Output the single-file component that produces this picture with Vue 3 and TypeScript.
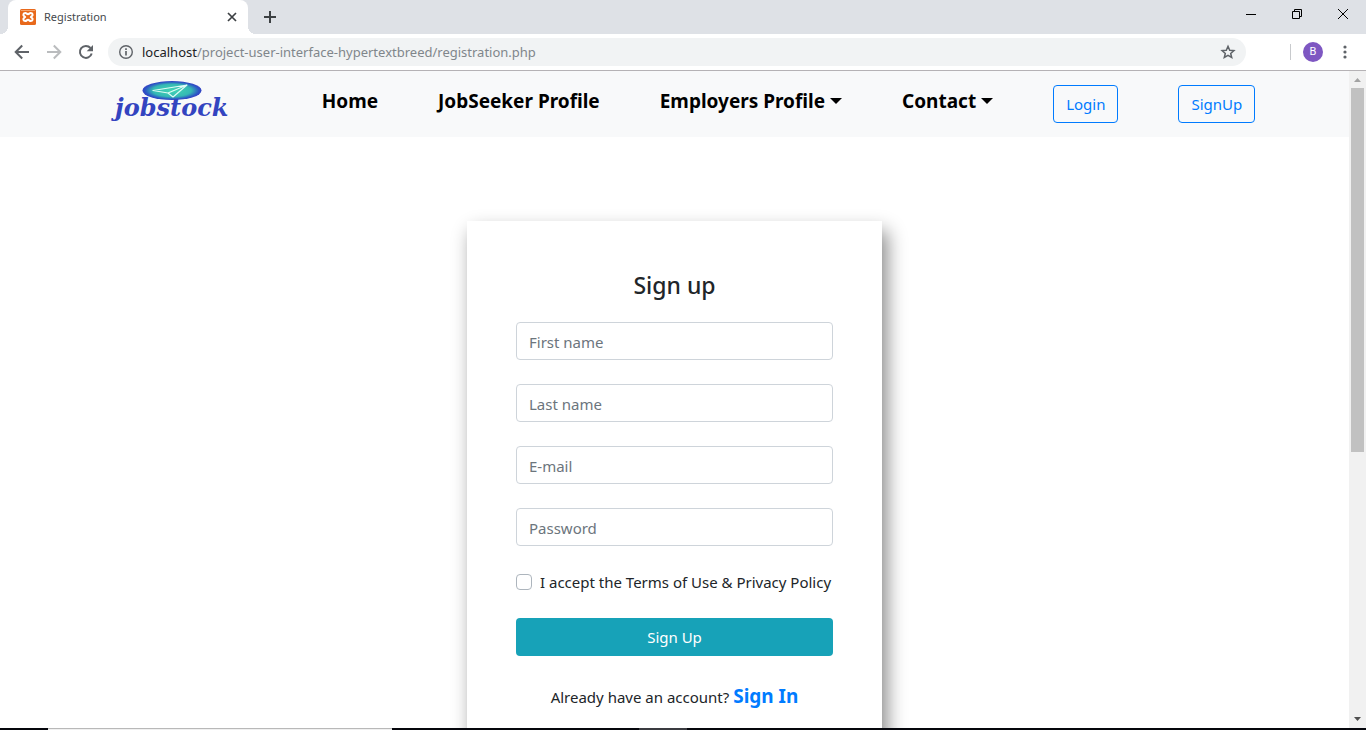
<script setup lang="ts">
import { ref } from 'vue'

interface NavItem {
  label: string
  menu: boolean
}
interface Field {
  id: string
  label: string
  type: string
}

const navItems: NavItem[] = [
  { label: 'Home', menu: false },
  { label: 'JobSeeker Profile', menu: false },
  { label: 'Employers Profile', menu: true },
  { label: 'Contact', menu: true },
]
const fields: Field[] = [
  { id: 'first-name', label: 'First name', type: 'text' },
  { id: 'last-name', label: 'Last name', type: 'text' },
  { id: 'email', label: 'E-mail', type: 'email' },
  { id: 'password', label: 'Password', type: 'password' },
]
const values = ref<Record<string, string>>({})
const accepted = ref(false)
</script>

<template>
  <div class="window">
    <header class="tabstrip">
      <div class="tab">
        <svg class="favicon" viewBox="0 0 16 16" width="16" height="16" aria-hidden="true">
          <rect width="16" height="16" rx="1.5" fill="#e8691c" />
          <path d="M1 1.5h14" stroke="#f7a66f" />
          <path d="M5.300 4C3.200 4 2.800 6.300 4.200 7.200L5.200 8l-1 .8C2.800 9.700 3.200 12 5.300 12 6.600 12 6.800 10.800 8 10.800S9.400 12 10.700 12c2.100 0 2.500-2.300 1.100-3.200L10.800 8l1-.8C13.200 6.300 12.800 4 10.700 4 9.400 4 9.200 5.200 8 5.200S6.600 4 5.300 4z" fill="none" stroke="#fff" stroke-width="2" stroke-linejoin="round" />
        </svg>
        <span class="tab-title">Registration</span>
        <button class="icon-btn" type="button" aria-label="Close tab">
          <svg viewBox="0 0 16 16" width="16" height="16"><path d="M4 4l8 8M12 4l-8 8" stroke="#3c4043" stroke-width="1.700" /></svg>
        </button>
      </div>
      <button class="icon-btn new-tab" type="button" aria-label="New tab">
        <svg viewBox="0 0 16 16" width="16" height="16"><path d="M8 2v12M2 8h12" stroke="#3c4043" stroke-width="2" /></svg>
      </button>
      <div class="window-controls">
        <button class="icon-btn" type="button" aria-label="Minimize">
          <svg viewBox="0 0 12 12" width="12" height="12"><path d="M1 6.500h10" stroke="#000" /></svg>
        </button>
        <button class="icon-btn" type="button" aria-label="Restore">
          <svg viewBox="0 0 12 12" width="12" height="12"><path d="M1.500 3.500h7v7h-7zM3.500 3.500v-2h7v7h-2" fill="none" stroke="#000" /></svg>
        </button>
        <button class="icon-btn" type="button" aria-label="Close">
          <svg viewBox="0 0 12 12" width="12" height="12"><path d="M1 1l10 10M11 1L1 11" stroke="#000" /></svg>
        </button>
      </div>
    </header>

    <div class="toolbar">
      <button class="icon-btn" type="button" aria-label="Back">
        <svg viewBox="0 0 16 16" width="16" height="16"><path d="M15 8H2M8.200 1.500L1.700 8l6.500 6.500" fill="none" stroke="#5f6368" stroke-width="2" /></svg>
      </button>
      <button class="icon-btn" type="button" aria-label="Forward">
        <svg viewBox="0 0 16 16" width="16" height="16"><path d="M1 8h13M7.800 1.500L14.300 8l-6.500 6.500" fill="none" stroke="#babcbe" stroke-width="2" /></svg>
      </button>
      <button class="icon-btn" type="button" aria-label="Reload">
        <svg viewBox="0 0 16 16" width="16" height="16"><path d="M13.700 9.500A6 6 0 1 1 12.500 4" fill="none" stroke="#5f6368" stroke-width="2" /><path d="M15 1v6.300H8.700z" fill="#5f6368" /></svg>
      </button>
      <div class="omnibox">
        <svg viewBox="0 0 16 16" width="16" height="16" aria-hidden="true"><circle cx="8" cy="8" r="6.300" fill="none" stroke="#5f6368" stroke-width="1.400" /><path d="M8 7v4.500M8 4.300v1.700" stroke="#5f6368" stroke-width="1.700" /></svg>
        <span class="url"><span class="host">localhost</span>/project-user-interface-hypertextbreed/registration.php</span>
        <button class="icon-btn" type="button" aria-label="Bookmark">
          <svg viewBox="0 0 16 16" width="16" height="16"><path d="M8 2.300l1.700 3.900 4.200.4-3.200 2.800 1 4.100L8 11.300l-3.700 2.200 1-4.100-3.200-2.800 4.200-.4z" fill="none" stroke="#5f6368" stroke-width="1.500" /></svg>
        </button>
      </div>
      <span class="divider"></span>
      <button class="avatar" type="button">B</button>
      <button class="icon-btn" type="button" aria-label="Menu">
        <svg viewBox="0 0 16 16" width="16" height="16" fill="#5f6368"><circle cx="8" cy="3" r="1.600" /><circle cx="8" cy="8" r="1.600" /><circle cx="8" cy="13" r="1.600" /></svg>
      </button>
    </div>

    <div class="viewport">
      <div class="page">
        <nav class="navbar">
          <a class="brand" href="#">
            <svg viewBox="0 0 60 20" width="60" height="20" aria-hidden="true">
              <defs>
                <radialGradient id="badge">
                  <stop offset="0" stop-color="#43d5b5" />
                  <stop offset="0.650" stop-color="#35b9b4" />
                  <stop offset="0.900" stop-color="#2c58c4" />
                  <stop offset="1" stop-color="#3340c4" />
                </radialGradient>
              </defs>
              <ellipse cx="30" cy="10.500" rx="29.500" ry="9.500" fill="url(#badge)" />
              <path d="M11 10.500L45 5 31 17l-5-4zM45 5L26 13" fill="none" stroke="#dffcf5" stroke-width="1.200" stroke-linejoin="round" />
            </svg>
            <span class="brand-name">jobstock</span>
          </a>
          <a v-for="item in navItems" :key="item.label" class="nav-link" href="#">
            {{ item.label }}<span v-if="item.menu" class="caret"></span>
          </a>
          <button class="outline-btn" type="button">Login</button>
          <button class="outline-btn" type="button">SignUp</button>
        </nav>

        <form class="card" @submit.prevent>
          <h1>Sign up</h1>
          <input
            v-for="field in fields"
            :id="field.id"
            :key="field.id"
            v-model="values[field.id]"
            class="field"
            :type="field.type"
            :placeholder="field.label"
            :aria-label="field.label"
          />
          <div class="terms">
            <input id="terms" v-model="accepted" type="checkbox" />
            <label for="terms">I accept the Terms of Use &amp; Privacy Policy</label>
          </div>
          <button class="submit" type="submit">Sign Up</button>
          <p class="signin">Already have an account? <a href="#">Sign In</a></p>
        </form>
      </div>
      <div class="scrollbar" aria-hidden="true">
        <svg viewBox="0 0 17 17" width="17" height="17"><path d="M5 11l3.500-4 3.500 4z" fill="#a3a3a3" /></svg>
        <div class="track"><div class="thumb"></div></div>
        <svg viewBox="0 0 17 17" width="17" height="17"><path d="M5 6h7l-3.500 4z" fill="#505050" /></svg>
      </div>
    </div>
    <div class="taskbar"><span class="search"></span><span class="task"></span></div>
  </div>
</template>

<style>
body {
  margin: 0;
  overflow: hidden;
}
</style>

<style scoped>
.window {
  display: flex;
  flex-direction: column;
  height: 100vh;
  background: #fff;
  color: #212529;
  font-family: "Noto Sans", "Open Sans", sans-serif;
  font-size: 15px;
  line-height: 24px;
}
* {
  box-sizing: border-box;
}
button,
input {
  font: inherit;
}
a {
  text-decoration: none;
}
svg {
  display: block;
  flex: none;
}
.icon-btn {
  display: grid;
  place-items: center;
  flex: none;
  padding: 0;
  border: 0;
  background: none;
}
.tabstrip {
  display: flex;
  align-items: center;
  flex: none;
  height: 34px;
  padding-left: 8px;
  background: #dee1e6;
}
.tab {
  position: relative;
  display: flex;
  align-items: center;
  gap: 8px;
  width: 240px;
  height: 34px;
  padding: 0 8px 0 12px;
  border-radius: 8px 8px 0 0;
  background: #fff;
}
.tab::before,
.tab::after {
  content: "";
  position: absolute;
  bottom: 0;
  width: 8px;
  height: 8px;
}
.tab::before {
  right: 100%;
  background: radial-gradient(circle at 0 0, transparent 8px, #fff 8px);
}
.tab::after {
  left: 100%;
  background: radial-gradient(circle at 100% 0, transparent 8px, #fff 8px);
}
.tab-title {
  flex: 1;
  color: #45494d;
  font-size: 11px;
}
.new-tab {
  margin-left: 14px;
}
.window-controls {
  display: flex;
  gap: 34px;
  margin-left: auto;
  padding: 0 17px 6px 0;
}
.toolbar {
  display: flex;
  align-items: center;
  gap: 16px;
  flex: none;
  height: 37px;
  padding: 0 14px;
  border-bottom: 1px solid #b5b2b5;
}
.omnibox {
  display: flex;
  align-items: center;
  gap: 8px;
  flex: 1;
  height: 28px;
  margin-right: 28px;
  margin-left: -2px;
  padding: 0 10px;
  border-radius: 14px;
  background: #f1f3f4;
  font-size: 13px;
}
.url {
  flex: 1;
  color: #80868b;
}
.host {
  color: #202124;
}
.divider {
  width: 1px;
  height: 16px;
  margin-right: -4px;
  background: #c8cacd;
}
.avatar {
  width: 20px;
  height: 20px;
  margin-right: -2px;
  padding: 0;
  border: 0;
  border-radius: 50%;
  background: #7e57c2;
  color: #fff;
  font-family: Roboto, sans-serif;
  font-size: 11px;
  line-height: 20px;
}
.avatar + .icon-btn {
  margin-right: -1px;
}
.viewport {
  display: flex;
  flex: 1;
  min-height: 0;
}
.page {
  flex: 1;
  overflow: hidden;
}
.navbar {
  display: flex;
  align-items: flex-start;
  justify-content: center;
  gap: 60px;
  height: 66px;
  padding: 9px 12px 0 0;
  background: #f8f9fa;
}
.brand {
  display: flex;
  flex-direction: column;
  align-items: center;
  width: 180px;
  color: #3344c0;
}
.brand-name {
  font-family: "DejaVu Serif", serif;
  font-size: 24px;
  font-style: italic;
  font-weight: 700;
  line-height: 16px;
}
.nav-link {
  display: flex;
  align-items: center;
  gap: 5px;
  height: 42px;
  color: #000;
  font-size: 19px;
  font-weight: 700;
  white-space: nowrap;
}
.caret {
  border: 6px solid transparent;
  border-top-color: #000;
  border-bottom: 0;
}
.outline-btn {
  height: 38px;
  margin-top: 5px;
  padding: 0 12px;
  border: 1px solid #007bff;
  border-radius: 4px;
  background: transparent;
  color: #007bff;
}
.card {
  width: 415px;
  height: 600px;
  margin: 84px auto 0;
  padding: 48px 49px;
  background: #fff;
  box-shadow: 5px 10px 18px #888;
}
h1 {
  margin: 0 0 21px;
  font-size: 23px;
  font-weight: 500;
  line-height: 32px;
  text-align: center;
}
.field {
  display: block;
  width: 100%;
  height: 38px;
  margin-bottom: 24px;
  padding: 2px 12px 0;
  border: 1px solid #ced4da;
  border-radius: 4px;
  background: #fff;
  color: #495057;
}
.field::placeholder {
  color: #6c757d;
  opacity: 1;
}
.terms {
  display: flex;
  align-items: center;
  gap: 8px;
  margin-bottom: 24px;
  white-space: nowrap;
}
.terms input {
  appearance: none;
  flex: none;
  width: 16px;
  height: 16px;
  margin: 0;
  border: 1px solid #adb5bd;
  border-radius: 4px;
  background: #fff;
}
.terms input:checked {
  background: #007bff;
}
.submit {
  width: 100%;
  height: 38px;
  border: 0;
  border-radius: 4px;
  background: #17a2b8;
  color: #fff;
}
.signin {
  margin: 26px 0 0;
  line-height: 28px;
  text-align: center;
}
.signin a {
  color: #007bff;
  font-size: 19px;
  font-weight: 700;
}
.scrollbar {
  display: flex;
  flex-direction: column;
  width: 17px;
  background: #f1f1f1;
}
.track {
  flex: 1;
  padding: 0 2px;
}
.thumb {
  height: 58.5%;
  background: #c1c1c1;
}
.taskbar {
  display: flex;
  flex: none;
  height: 2px;
  background: #05060c;
}
.search {
  width: 344px;
  margin-left: 48px;
  border-top: 1px solid #b8b8b8;
  background: #f0f0f0;
}
.task {
  width: 48px;
  margin-left: 247px;
  background: #3a3b40;
}
</style>
